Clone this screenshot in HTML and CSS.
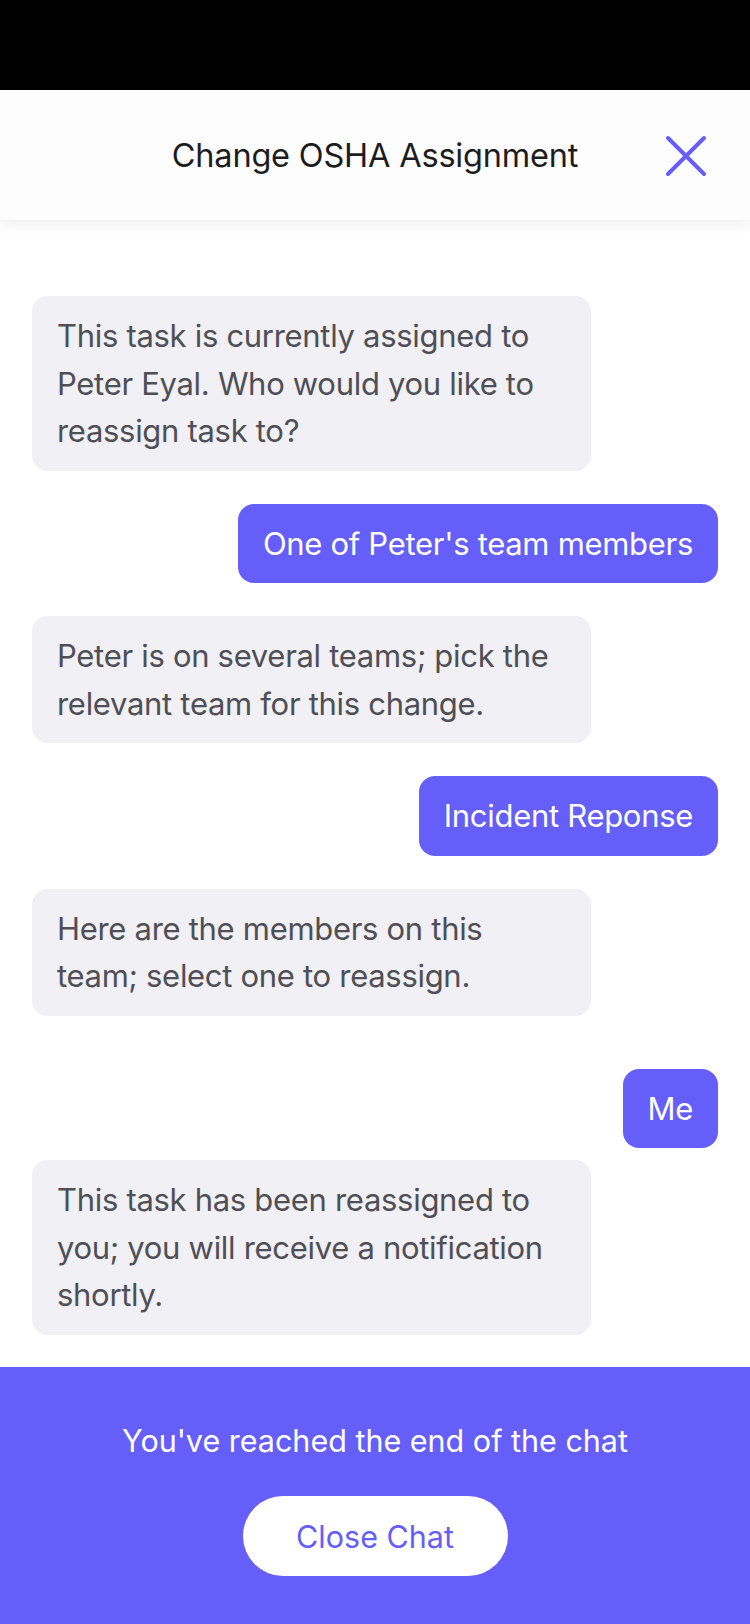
FILE: index.html
```html
<!DOCTYPE html>
<html lang="en">
<head>
<meta charset="utf-8">
<title>Change OSHA Assignment</title>
<link rel="stylesheet" href="styles.css">
</head>
<body>
<div class="screen">
  <div class="status-bar"></div>
  <header class="header">
    <h1 class="title">Change OSHA Assignment</h1>
    <button class="close-btn" aria-label="Close">
      <svg width="42" height="42" viewBox="0 0 42 42"><path d="M3 3 L39 39 M39 3 L3 39" stroke="#665ef8" stroke-width="4" stroke-linecap="round" fill="none"/></svg>
    </button>
  </header>
  <main class="chat">
    <div class="msg bot">This task is currently assigned to Peter Eyal. Who would you like to reassign task to?</div>
    <div class="msg user">One of Peter's team members</div>
    <div class="msg bot">Peter is on several teams; pick the relevant team for this change.</div>
    <div class="msg user">Incident Reponse</div>
    <div class="msg bot">Here are the members on this team; select one to reassign.</div>
    <div class="msg user me">Me</div>
    <div class="msg bot after-me">This task has been reassigned to you; you will receive a notification shortly.</div>
  </main>
  <footer class="footer">
    <p class="end-text">You've reached the end of the chat</p>
    <button class="close-chat">Close Chat</button>
  </footer>
</div>
</body>
</html>
```
FILE: styles.css
```css
* { box-sizing: border-box; }
html, body { margin: 0; padding: 0; }
body {
  width: 750px;
  height: 1624px;
  background: #ffffff;
  font-family: "Inter", "Liberation Sans", sans-serif;
  overflow: hidden;
}
.screen {
  display: flex;
  flex-direction: column;
  height: 1624px;
}
.status-bar {
  height: 90px;
  background: #000;
  flex-shrink: 0;
}
.header {
  position: relative;
  height: 130px;
  background: #fdfdfd;
  display: flex;
  align-items: center;
  justify-content: center;
  box-shadow: 0 4px 14px rgba(0,0,0,0.07);
  z-index: 1;
  flex-shrink: 0;
}
.title {
  margin: 0;
  font-size: 32.5px;
  font-weight: 400;
  color: #1c1c1e;
  letter-spacing: -0.2px;
}
.close-btn {
  position: absolute;
  right: 43px;
  top: 45px;
  padding: 0;
  border: 0;
  background: none;
  width: 42px;
  height: 42px;
}
.close-btn svg { display: block; }
.chat {
  flex: 1;
  display: flex;
  flex-direction: column;
  padding: 76px 32px 0 32px;
  gap: 33px;
}
.msg {
  font-size: 31px;
  line-height: 47.5px;
  border-radius: 16px;
  letter-spacing: -0.3px;
}
.bot {
  align-self: flex-start;
  width: 559px;
  background: #f0f0f5;
  color: #4f4f55;
  padding: 16px 22px 16px 25px;
}
.user {
  align-self: flex-end;
  background: #665ef8;
  color: #ffffff;
  padding: 16px 25px;
}
.me { margin-top: 20px; }
.after-me { margin-top: -21px; }
.footer {
  height: 257px;
  background: #665ef8;
  display: flex;
  flex-direction: column;
  align-items: center;
  flex-shrink: 0;
}
.end-text {
  margin: 56px 0 0;
  color: #ffffff;
  font-size: 30.5px;
  line-height: 36px;
}
.close-chat {
  margin-top: 37px;
  width: 265px;
  height: 80px;
  border: 0;
  border-radius: 40px;
  background: #ffffff;
  color: #665ef8;
  font-family: inherit;
  font-size: 30.5px;
}
```
